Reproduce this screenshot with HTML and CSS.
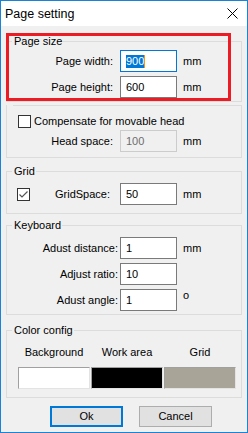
FILE: index.html
```html
<!DOCTYPE html>
<html>
<head>
<meta charset="utf-8">
<link rel="stylesheet" href="styles.css">
</head>
<body>
<div class="window">
  <div class="titlebar">
    <span class="title">Page setting</span>
    <svg class="close" viewBox="0 0 11 11" width="11" height="11"><path d="M0.5 0.5 L10.5 10.5 M10.5 0.5 L0.5 10.5" stroke="#000" stroke-width="1" fill="none"/></svg>
  </div>
  <div class="body">
    <fieldset class="group g-size">
      <legend>Page size</legend>
      <div class="row">
        <span class="lbl">Page width:</span>
        <div class="edit focus"><span class="sel">900</span><span class="caret"></span></div>
        <span class="unit">mm</span>
      </div>
      <div class="row">
        <span class="lbl">Page height:</span>
        <div class="edit">600</div>
        <span class="unit">mm</span>
      </div>
    </fieldset>

    <fieldset class="group g-comp">
      <legend class="empty"></legend>
      <div class="chkrow">
        <span class="chk"></span>
        <span class="chktext">Compensate for movable head</span>
      </div>
      <div class="row">
        <span class="lbl">Head space:</span>
        <div class="edit disabled">100</div>
        <span class="unit">mm</span>
      </div>
    </fieldset>

    <fieldset class="group g-grid">
      <legend>Grid</legend>
      <div class="row">
        <span class="chk checked"><svg viewBox="0 0 11 11" width="11" height="11"><path d="M1.5 5.5 L4 8 L9.5 2.5" stroke="#555" stroke-width="1.2" fill="none"/></svg></span>
        <span class="lbl">GridSpace:</span>
        <div class="edit">50</div>
        <span class="unit">mm</span>
      </div>
    </fieldset>

    <fieldset class="group g-key">
      <legend>Keyboard</legend>
      <div class="row">
        <span class="lbl">Adust distance:</span>
        <div class="edit">1</div>
        <span class="unit">mm</span>
      </div>
      <div class="row">
        <span class="lbl">Adjust ratio:</span>
        <div class="edit">10</div>
      </div>
      <div class="row">
        <span class="lbl">Adust angle:</span>
        <div class="edit">1</div>
        <span class="unit deg">o</span>
      </div>
    </fieldset>

    <fieldset class="group g-color">
      <legend>Color config</legend>
      <div class="colors">
        <span class="clbl">Background</span>
        <span class="clbl">Work area</span>
        <span class="clbl">Grid</span>
        <span class="swatch white"></span>
        <span class="swatch black"></span>
        <span class="swatch gray"></span>
      </div>
    </fieldset>

    <div class="buttons">
      <div class="btn default">Ok</div>
      <div class="btn">Cancel</div>
    </div>

    <div class="annot"></div>
  </div>
</div>
</body>
</html>
```

FILE: styles.css
```css
* { box-sizing: border-box; }
html, body { margin: 0; padding: 0; }
body {
  width: 248px;
  height: 433px;
  overflow: hidden;
  font-family: "Liberation Sans", Arial, sans-serif;
  font-size: 11px;
  line-height: 13px;
  color: #000;
}
.window {
  width: 248px;
  height: 433px;
  border: 1px solid #1883d7;
  background: #f0f0f0;
  display: flex;
  flex-direction: column;
}
.titlebar {
  height: 25px;
  flex: none;
  background: #fff;
  display: flex;
  align-items: center;
  justify-content: space-between;
  padding: 0 9px 0 4px;
}
.title { font-size: 12.5px; line-height: 14px; }
.close { display: block; }

.body {
  position: relative;
  flex: 1;
  padding: 0 5px;
  display: flex;
  flex-direction: column;
}
.group {
  margin: 0;
  padding: 0;
  border: 1px solid #dcdcdc;
  min-width: 0;
  display: flex;
  flex-direction: column;
  gap: 4px;
}
.group legend {
  font-size: 11px;
  line-height: 12px;
  padding: 0 1px 0 2px;
  margin-left: 5px;
}
.group legend.empty {
  width: 6px;
  height: 0;
  padding: 0;
  margin-left: 0;
}
.g-size { margin-top: 9px; padding: 3px 0 3px; }
.g-comp { margin-top: 3px; padding: 9px 0 5px; gap: 2px; }
.g-grid { margin-top: 7px; padding: 6px 0 8px; }
.g-key { margin-top: 5px; padding: 6px 0 3px; }
.g-color { margin-top: 9px; padding: 10px 0 8px; }

.row {
  display: flex;
  align-items: center;
  height: 22px;
}
.lbl {
  width: 106px;
  text-align: right;
  margin-right: 7px;
  white-space: nowrap;
}
.g-key .lbl { width: 111px; margin-right: 2px; }
.g-grid .lbl { width: 80px; margin-right: 10px; }

.edit {
  width: 57px;
  height: 22px;
  border: 1px solid #7a7a7a;
  background: #fff;
  padding-left: 5px;
  display: flex;
  align-items: center;
  flex: none;
}
.edit.focus { border-color: #0078d7; }
.edit.disabled { border-color: #cccccc; background: #f0f0f0; color: #6d6d6d; }
.sel { background: #0078d7; color: #fff; }
.caret { width: 1px; height: 13px; background: #f7941d; }
.unit { margin-left: 6px; }
.unit.deg { align-self: flex-start; margin-top: 0; }

.chkrow {
  display: flex;
  align-items: center;
  height: 13px;
  padding-left: 11px;
}
.chk {
  width: 13px;
  height: 13px;
  border: 1px solid #333;
  background: #fff;
  flex: none;
  display: block;
}
.chk svg { display: block; }
.chktext { margin-left: 3px; white-space: nowrap; }
.g-grid .chk { margin-left: 10px; }

.colors {
  display: grid;
  grid-template-columns: 72px 72px 72px;
  column-gap: 1px;
  row-gap: 8px;
  padding-left: 11px;
}
.clbl { text-align: center; }
.swatch {
  height: 22px;
  border: 1px solid;
  border-color: #a0a0a0 #e3e3e3 #e3e3e3 #a0a0a0;
}
.swatch.white { background: #fff; }
.swatch.black { background: #000; }
.swatch.gray { background: #a8a598; }

.buttons {
  display: flex;
  gap: 16px;
  margin-top: 8px;
  padding-left: 44px;
}
.btn {
  width: 73px;
  height: 21px;
  background: #e1e1e1;
  border: 1px solid #adadad;
  display: flex;
  align-items: center;
  justify-content: center;
}
.btn.default { border: 2px solid #0078d7; }

.annot {
  position: absolute;
  left: 5px;
  top: 7px;
  width: 225px;
  height: 68px;
  border: 3px solid #ed1c24;
}
```
